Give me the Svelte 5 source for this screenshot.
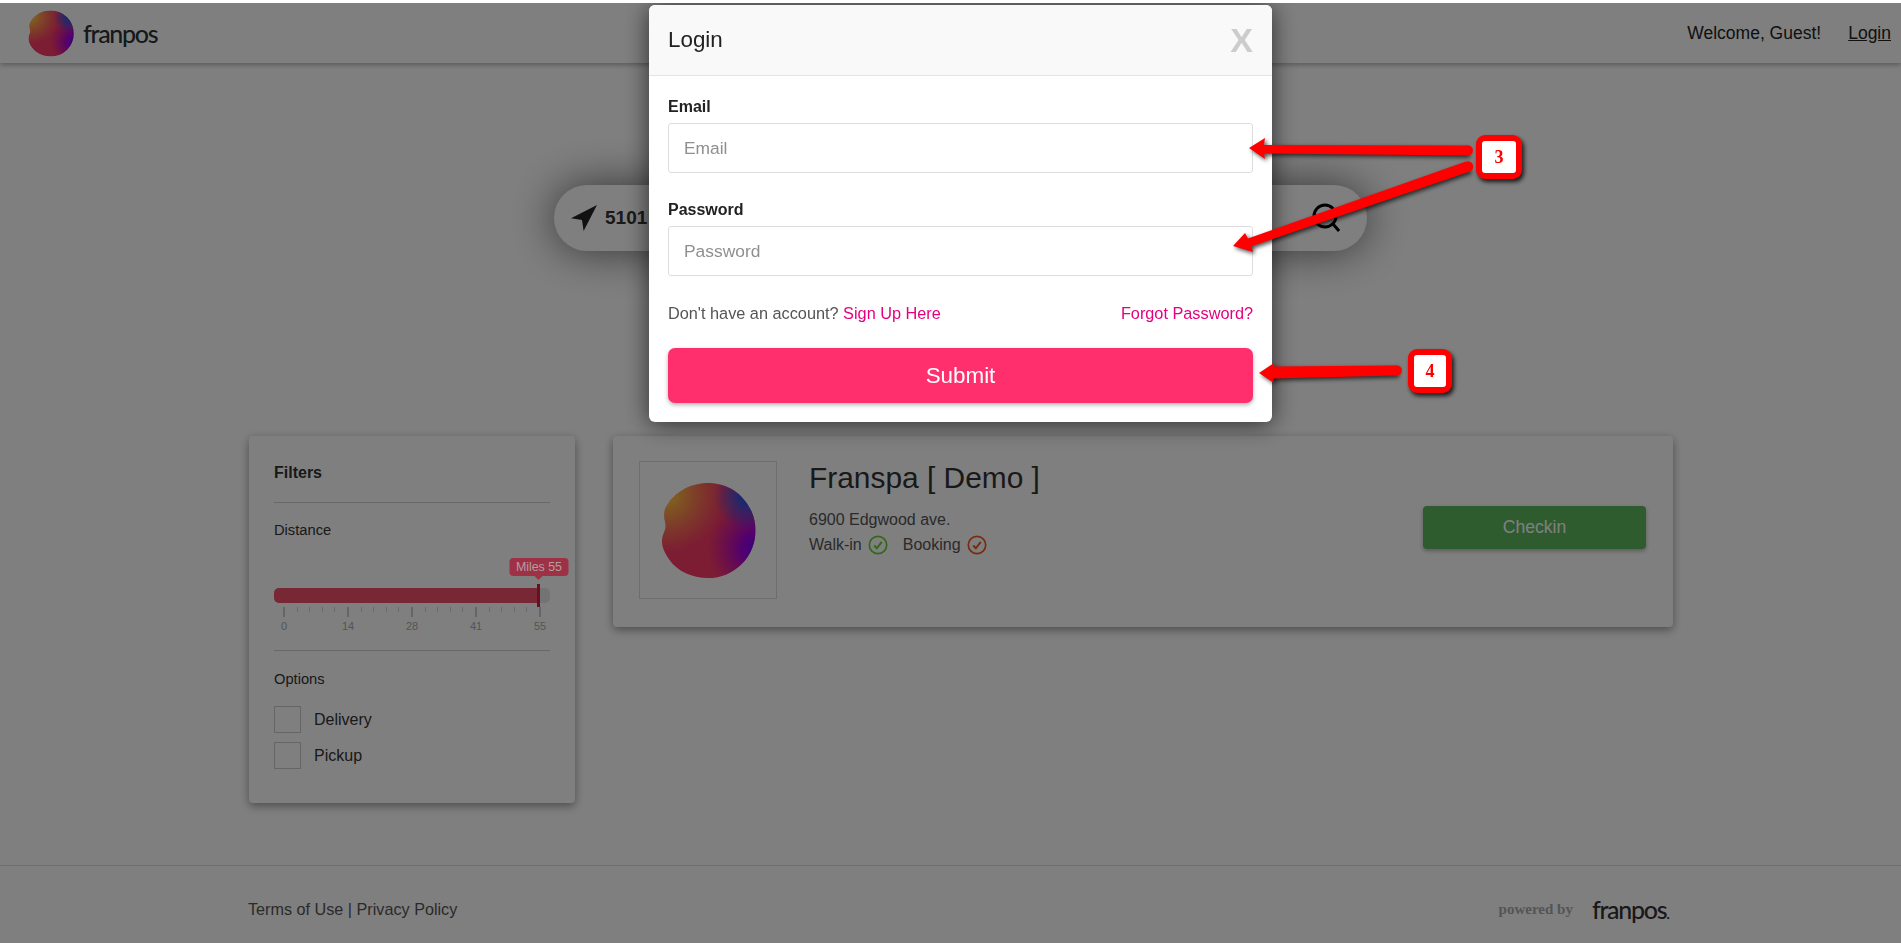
<script>
  const miles = 55;
  const fillPct = 96;
  const ticks = Array.from({ length: 21 }, (_, i) => i);
  const labels = [0, 14, 28, 41, 55];
  const options = ['Delivery', 'Pickup'];
</script>

<svelte:head><title>franpos</title></svelte:head>

{#snippet blob(id, cls)}
  <svg class={cls} viewBox="155 152 285 291" aria-hidden="true">
    <defs>
      <radialGradient id="{id}-y" gradientUnits="userSpaceOnUse" cx="170" cy="190" r="175">
        <stop offset="0" stop-color="#ffd93a" />
        <stop offset="1" stop-color="#ffb03a" stop-opacity="0" />
      </radialGradient>
      <radialGradient id="{id}-b" gradientUnits="userSpaceOnUse" cx="415" cy="195" r="100">
        <stop offset="0" stop-color="#0058ff" />
        <stop offset="1" stop-color="#0058ff" stop-opacity="0" />
      </radialGradient>
      <radialGradient id="{id}-p" gradientUnits="userSpaceOnUse" cx="445" cy="350" r="150">
        <stop offset="0" stop-color="#7000ff" />
        <stop offset="0.3" stop-color="#a000e0" />
        <stop offset="1" stop-color="#c000b0" stop-opacity="0" />
      </radialGradient>
      <clipPath id="{id}-c">
        <path d="M297 155A141 142 0 0 1 297 440C248 440 205 420 180 385C168 368 158 350 158 330C158 312 169 298 169 285C169 272 165 268 165 252C165 238 168 230 172 225C196 182 245 155 297 155Z" />
      </clipPath>
    </defs>
    <g clip-path="url(#{id}-c)">
      <rect x="155" y="152" width="285" height="291" fill="#f83a68" />
      <rect x="155" y="152" width="285" height="291" fill="url(#{id}-y)" />
      <rect x="155" y="152" width="285" height="291" fill="url(#{id}-p)" />
      <rect x="155" y="152" width="285" height="291" fill="url(#{id}-b)" />
    </g>
  </svg>
{/snippet}

<div class="page">
  <div class="strip"></div>
  <header class="topbar">
    <a class="brand" href="#home">
      {@render blob('logo', 'brand-mark')}
      <span class="wordmark">franpos</span>
    </a>
    <div class="account">
      <span>Welcome, Guest!</span>
      <a href="#login">Login</a>
    </div>
  </header>

  <main class="content">
    <div class="search">
      <svg class="nav-icon" viewBox="0 0 26 26" aria-hidden="true">
        <path d="M26 0 0 13.300 11 15 12.600 26Z" fill="#222" />
      </svg>
      <strong>5101</strong>
      <svg class="search-icon" viewBox="0 0 28 30" aria-hidden="true">
        <circle cx="13" cy="13" r="11" fill="none" stroke="#000" stroke-width="3" />
        <path d="M21 21l6 7" stroke="#000" stroke-width="3" fill="none" />
      </svg>
    </div>

    <div class="columns">
      <aside class="filters">
        <h3>Filters</h3>
        <hr />
        <p class="group-title">Distance</p>
        <div class="slider">
          <div class="track">
            <div class="fill" style="width: {fillPct}%"></div>
            <div class="handle" style="left: {fillPct}%"></div>
            <div class="bubble" style="left: {fillPct}%">Miles {miles}</div>
          </div>
          <div class="ticks">
            {#each ticks as t}
              <i class:major={t % 5 === 0}></i>
            {/each}
          </div>
          <div class="tick-labels">
            {#each labels as l}
              <span><b>{l}</b></span>
            {/each}
          </div>
        </div>
        <hr class="second" />
        <p class="group-title options-title">Options</p>
        {#each options as o}
          <label class="option"><span class="box"></span>{o}</label>
        {/each}
      </aside>

      <section class="result">
        <div class="thumb">
          {@render blob('thumb', 'thumb-mark')}
        </div>
        <div class="info">
          <h2>Franspa [ Demo ]</h2>
          <p class="address">6900 Edgwood ave.</p>
          <p class="services">
            <span>Walk-in</span>
            <svg class="check" viewBox="0 0 20 20" aria-hidden="true">
              <circle cx="10" cy="10" r="8.700" fill="none" stroke="#66d030" stroke-width="1.700" />
              <path d="M6.200 10.500l2.600 2.800 5-6.500" fill="none" stroke="#66d030" stroke-width="2" />
            </svg>
            <span class="booking">Booking</span>
            <svg class="check" viewBox="0 0 20 20" aria-hidden="true">
              <circle cx="10" cy="10" r="8.700" fill="none" stroke="#f0581e" stroke-width="1.700" />
              <path d="M6.200 10.500l2.600 2.800 5-6.500" fill="none" stroke="#f0581e" stroke-width="2" />
            </svg>
          </p>
        </div>
        <button class="checkin">Checkin</button>
      </section>
    </div>
  </main>

  <footer class="footer">
    <div class="legal"><a href="#terms">Terms of Use</a> | <a href="#privacy">Privacy Policy</a></div>
    <div class="powered">
      <span class="by">powered by</span>
      <span class="wordmark small">franpos<em>.</em></span>
    </div>
  </footer>
</div>

<div class="backdrop">
  <div class="modal">
    <div class="modal-head">
      <span class="modal-title">Login</span>
      <span class="close">X</span>
    </div>
    <form class="modal-body">
      <label class="field-label" for="email">Email</label>
      <input id="email" type="text" placeholder="Email" />
      <label class="field-label pw" for="password">Password</label>
      <input id="password" type="text" placeholder="Password" />
      <div class="links">
        <span>Don't have an account? <a href="#signup">Sign Up Here</a></span>
        <a href="#forgot">Forgot Password?</a>
      </div>
      <button type="button" class="submit">Submit</button>
    </form>
  </div>
</div>

<svg class="arrows" viewBox="0 0 1901 943" aria-hidden="true">
  <g class="arrow">
    <path d="M1249 148 1265 138 1264 145 1468 145.500 1468 155.500 1264 153.500 1265 159Z" />
    <path d="M1233 246 1245 233 1248 238.500 1466 161.500 1470 171.500 1251 246.500 1253 252Z" />
    <path d="M1259 373 1274 363 1273 366.500 1397 365.500 1397 375.500 1273 378.500 1274 383Z" />
  </g>
  <g class="caps">
    <circle cx="1468" cy="150.500" r="5" />
    <circle cx="1468" cy="166.500" r="5.300" />
    <circle cx="1397" cy="370.500" r="5" />
  </g>
</svg>

<div class="badge three">3</div>
<div class="badge four">4</div>

<style>
  :global(body) {
    margin: 0;
    background: #fff;
    font-family: "Liberation Sans", Arial, sans-serif;
    color: #333;
    font-size: 16px;
    overflow: hidden;
  }

  a { color: inherit; text-decoration: none; }

  .page {
    width: 1901px;
    height: 943px;
    display: flex;
    flex-direction: column;
    overflow: hidden;
  }

  .strip { height: 3px; background: #fff; flex: none; position: relative; z-index: 30; }

  .topbar {
    height: 60px;
    flex: none;
    display: flex;
    align-items: center;
    justify-content: space-between;
    padding: 0 10px 0 28px;
    background: #fff;
    box-shadow: 0 2px 5px rgba(0, 0, 0, 0.3);
    box-sizing: border-box;
  }

  .brand { display: flex; align-items: center; gap: 9px; }
  .brand-mark { width: 46px; height: 47px; }
  .wordmark {
    font-family: Lato, sans-serif;
    font-size: 25px;
    font-weight: 500;
    color: #2a3238;
    letter-spacing: -1.300px;
    line-height: 1;
  }
  .wordmark.small { color: #333; }
  .wordmark em { font-style: normal; font-size: 16px; letter-spacing: 0; }

  .account { display: flex; gap: 27px; color: #222; font-size: 17.500px; }
  .account a { text-decoration: underline; }

  .content { flex: 1; display: flex; flex-direction: column; align-items: flex-start; }

  .search {
    margin: 122px 0 0 554px;
    width: 813px;
    height: 66px;
    box-sizing: border-box;
    padding: 0 27px 0 17px;
    display: flex;
    align-items: center;
    background: #fff;
    border-radius: 33px;
    box-shadow: 0 0 45px rgba(0, 0, 0, 0.6);
    font-size: 19px;
    color: #333;
  }
  .nav-icon { width: 26px; height: 26px; margin-right: 8px; }
  .search-icon { width: 28px; height: 30px; margin-left: auto; }

  .columns {
    margin: 185px 0 0 249px;
    width: 1424px;
    display: flex;
    align-items: flex-start;
    gap: 38px;
  }

  .filters {
    width: 326px;
    height: 367px;
    flex: none;
    box-sizing: border-box;
    padding: 28px 25px 0;
    background: #fff;
    border-radius: 4px;
    box-shadow: 0 3px 10px rgba(0, 0, 0, 0.4);
  }
  .filters h3 {
    margin: 0;
    font-size: 16px;
    line-height: 18px;
    font-weight: 700;
    color: #333;
  }
  hr { border: 0; border-top: 1px solid #d0d0d0; margin: 20px 0 0; }
  hr.second { margin: 0; }

  .group-title {
    margin: 18px 0 0;
    font-size: 14.700px;
    line-height: 18px;
    color: #333;
  }
  .options-title { margin-top: 19px; }

  .slider { height: 111px; padding-top: 49px; box-sizing: border-box; }
  .track {
    position: relative;
    height: 15px;
    background: #e6e6ea;
    border-radius: 5px;
  }
  .fill { height: 100%; background: #f0506a; border-radius: 5px 0 0 5px; }
  .handle {
    position: absolute;
    top: -4px;
    width: 3px;
    height: 23px;
    margin-left: -2px;
    background: #d02040;
  }
  .bubble {
    position: absolute;
    z-index: 11;
    top: -30px;
    transform: translateX(-50%);
    width: 59px;
    height: 18px;
    line-height: 18px;
    text-align: center;
    font-size: 12.400px;
    color: #b39ea2;
    background: #9e3145;
    border-radius: 4px;
  }
  .bubble::after {
    content: "";
    position: absolute;
    left: 50%;
    bottom: -4px;
    margin-left: -4px;
    border: 4px solid transparent;
    border-bottom: 0;
    border-top-color: #9e3145;
  }
  .ticks {
    display: flex;
    justify-content: space-between;
    margin: 4px 9px 0 9px;
    height: 10px;
  }
  .ticks i { display: block; width: 1px; height: 5px; background: #d4d4d4; }
  .ticks i.major { height: 10px; width: 2px; background: #ccccd4; }
  .tick-labels {
    display: flex;
    justify-content: space-between;
    margin: 3px 10px 0 10px;
    font-size: 11px;
    line-height: 13px;
    color: #aaa;
  }
  .tick-labels span { width: 0; display: flex; justify-content: center; }
  .tick-labels b { font-weight: 400; }

  .option {
    display: flex;
    align-items: center;
    gap: 13px;
    height: 27px;
    margin-top: 9px;
    color: #333;
    font-size: 16px;
  }
  .options-title + .option { margin-top: 18px; }
  .box {
    width: 27px;
    height: 27px;
    box-sizing: border-box;
    border: 1px solid #ccc;
    background: #fff;
  }

  .result {
    flex: 1;
    height: 191px;
    box-sizing: border-box;
    padding: 25px 27px 0 26px;
    background: #fff;
    border-radius: 4px;
    box-shadow: 0 3px 10px rgba(0, 0, 0, 0.4);
    display: flex;
    align-items: flex-start;
  }
  .thumb {
    width: 138px;
    height: 138px;
    flex: none;
    box-sizing: border-box;
    border: 1px solid #ddd;
    display: flex;
    align-items: center;
    justify-content: center;
  }
  .thumb-mark { width: 95px; height: 97px; }
  .info { margin-left: 32px; flex: 1; color: #555; }
  .info h2 {
    margin: 0;
    font-size: 29.900px;
    line-height: 34px;
    font-weight: 400;
    color: #333;
  }
  .address { margin: 13px 0 0; line-height: 24px; }
  .services { margin: 1px 0 0; line-height: 24px; display: flex; align-items: center; }
  .check { width: 20px; height: 20px; margin-left: 6px; }
  .booking { margin-left: 15px; }

  .checkin {
    flex: none;
    margin-top: 45px;
    width: 223px;
    height: 43px;
    border: 0;
    border-radius: 4px;
    background: #5cb85c;
    color: #fff;
    font: 17.600px "Liberation Sans", Arial, sans-serif;
    box-shadow: 0 2px 4px rgba(0, 0, 0, 0.3);
  }

  .footer {
    height: 78px;
    flex: none;
    box-sizing: border-box;
    border-top: 1px solid #ddd;
    padding: 10px 231px 0 248px;
    display: flex;
    align-items: center;
    justify-content: space-between;
    color: #555;
  }
  .legal { font-size: 16.200px; }
  .powered { display: flex; align-items: center; gap: 19px; }
  .by {
    font-family: "Liberation Serif", serif;
    font-weight: 700;
    font-size: 15px;
    color: #aaa;
  }

  .backdrop {
    position: fixed;
    inset: 0;
    z-index: 10;
    background: rgba(0, 0, 0, 0.5);
    padding: 5px 0 0 649px;
    box-sizing: border-box;
  }
  .modal {
    width: 623px;
    height: 417px;
    background: #fff;
    border-radius: 6px;
    box-shadow: 0 2px 24px rgba(0, 0, 0, 0.65);
    overflow: hidden;
  }
  .modal-head {
    height: 71px;
    box-sizing: border-box;
    padding: 0 19px;
    background: #f9f9f9;
    border-bottom: 1px solid #e5e5e5;
    display: flex;
    align-items: center;
    justify-content: space-between;
  }
  .modal-title { font-size: 22.400px; color: #222; }
  .close {
    font-size: 34px;
    font-weight: 700;
    color: #ccc;
    line-height: 1;
  }
  .modal-body { display: flex; flex-direction: column; padding: 0 19px; }
  .field-label {
    margin-top: 21px;
    height: 20px;
    line-height: 20px;
    font-weight: 700;
    color: #222;
  }
  .field-label.pw { margin-top: 27px; }
  input {
    margin-top: 6px;
    height: 50px;
    box-sizing: border-box;
    border: 1px solid #ddd;
    border-radius: 3px;
    padding: 0 15px;
    font: 17.400px "Liberation Sans", Arial, sans-serif;
    outline: none;
  }
  input::placeholder { color: #8f8f8f; opacity: 1; }
  .links {
    margin-top: 27px;
    display: flex;
    justify-content: space-between;
    font-size: 16.300px;
    line-height: 20px;
    color: #555;
  }
  .links a { color: #e6007e; }
  .submit {
    margin-top: 25px;
    height: 55px;
    border: 0;
    border-radius: 7px;
    background: #ff2f6e;
    color: #fff;
    font: 22.400px "Liberation Sans", Arial, sans-serif;
    box-shadow: 0 2px 4px rgba(0, 0, 0, 0.3);
  }

  .arrows {
    position: fixed;
    left: 0;
    top: 0;
    width: 1901px;
    height: 943px;
    z-index: 20;
    pointer-events: none;
  }
  .arrow, .caps { fill: #f00; }
  .arrow { filter: drop-shadow(2px 2px 2px rgba(0, 0, 0, 0.7)); }

  .badge {
    position: fixed;
    z-index: 21;
    box-sizing: border-box;
    border: 6px solid #f00;
    border-radius: 9px;
    background: #fff;
    color: #f00;
    font: 700 18px "Liberation Serif", serif;
    display: flex;
    align-items: center;
    justify-content: center;
    box-shadow: 2px 3px 4px rgba(0, 0, 0, 0.8);
  }
  .three { left: 1476px; top: 135px; width: 46px; height: 44px; }
  .four { left: 1408px; top: 349px; width: 44px; height: 44px; }
</style>
